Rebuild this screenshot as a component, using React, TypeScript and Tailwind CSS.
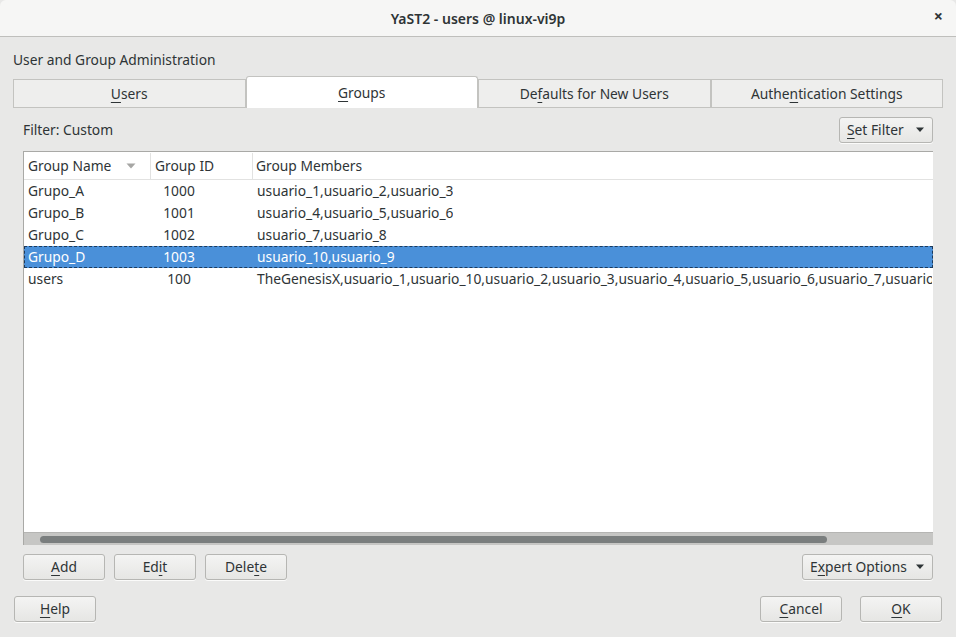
import React from 'react';

const font = { fontFamily: '"Noto Sans", "Open Sans", sans-serif' };

const rows = [
  { name: 'Grupo_A', id: '1000', members: 'usuario_1,usuario_2,usuario_3' },
  { name: 'Grupo_B', id: '1001', members: 'usuario_4,usuario_5,usuario_6' },
  { name: 'Grupo_C', id: '1002', members: 'usuario_7,usuario_8' },
  { name: 'Grupo_D', id: '1003', members: 'usuario_10,usuario_9', selected: true },
  {
    name: 'users',
    id: '100',
    members:
      'TheGenesisX,usuario_1,usuario_10,usuario_2,usuario_3,usuario_4,usuario_5,usuario_6,usuario_7,usuario_8',
  },
];

// label with one underlined mnemonic letter
const Mn: React.FC<{ pre?: string; k: string; post?: string }> = ({ pre = '', k, post = '' }) => (
  <span>
    {pre}
    <span className="underline underline-offset-[3px] decoration-1">{k}</span>
    {post}
  </span>
);

const Button: React.FC<{ className?: string; children: React.ReactNode }> = ({ className = '', children }) => (
  <button
    className={`flex h-[26px] items-center justify-center rounded-[3px] border border-[#b6b6b3] bg-gradient-to-b from-[#f4f4f3] to-[#e6e6e4] text-[13.8px] text-[#2e3436] shadow-[0_1px_0_rgba(255,255,255,0.8)] ${className}`}
  >
    {children}
  </button>
);

const Caret = () => (
  <svg width="10" height="6" viewBox="0 0 10 6" className="ml-auto">
    <path d="M1 0.5h8L5 5z" fill="#2e3436" />
  </svg>
);

const Tab: React.FC<{ active?: boolean; children: React.ReactNode }> = ({ active, children }) =>
  active ? (
    <div className="flex h-[32px] flex-1 items-center justify-center rounded-t-[3px] border border-b-0 border-[#c3c3c0] bg-white pt-[2px] text-[13.8px] text-[#2e3436]">
      {children}
    </div>
  ) : (
    <div className="flex h-[29px] flex-1 items-center justify-center border border-[#c3c3c0] bg-[#eeeeed] pt-[1px] text-[13.8px] text-[#2e3436]">
      {children}
    </div>
  );

export default function App() {
  return (
    <div className="h-[637px] w-[956px] overflow-hidden bg-[#e8e8e7] text-[13.8px] text-[#2e3436]" style={font}>
      {/* title bar */}
      <div className="relative flex h-[37px] items-center justify-center rounded-t-[6px] border-b border-[#bfbfbc] bg-[#f6f6f5]">
        <span className="text-[14px] font-semibold text-[#2e3436]">YaST2 - users @ linux-vi9p</span>
        <span className="absolute right-[13px] top-[8px] text-[16px] font-bold leading-none text-[#2e3436]">×</span>
      </div>

      <div className="px-[13px] pt-[13px]">
        <div className="leading-[20px]">User and Group Administration</div>

        {/* tabs */}
        <div className="mt-[6px] flex h-[32px] items-end">
          <Tab><Mn k="U" post="sers" /></Tab>
          <Tab active><Mn k="G" post="roups" /></Tab>
          <Tab><Mn pre="De" k="f" post="aults for New Users" /></Tab>
          <Tab><Mn pre="Authe" k="n" post="tication Settings" /></Tab>
        </div>

        <div className="px-[10px]">
          {/* filter row */}
          <div className="mt-[9px] flex h-[26px] items-center justify-between">
            <span>Filter: Custom</span>
            <Button className="w-[94px] px-[7px]">
              <Mn k="S" post="et Filter" />
              <Caret />
            </Button>
          </div>

          {/* table */}
          <div className="mt-[8px] flex h-[394px] flex-col border-l border-t border-[#a9a9a6] bg-white">
            <div className="flex h-[28px] shrink-0 items-center border-b border-[#e2e2e1] pt-[1px] text-[#2e3436]">
              <div className="flex h-full w-[127px] shrink-0 items-center border-r border-[#e2e2e1] pl-[4px] pr-[14px]">
                <span>Group Name</span>
                <svg width="10" height="6" viewBox="0 0 10 6" className="ml-auto">
                  <path d="M0.5 0.5h9L5 5.5z" fill="#a6a6a4" />
                </svg>
              </div>
              <div className="flex h-full w-[102px] shrink-0 items-center border-r border-[#e2e2e1] pl-[4px]">Group ID</div>
              <div className="pl-[3px]">Group Members</div>
            </div>
            <div className="flex-1">
              {rows.map((r) => (
                <div
                  key={r.name}
                  className={`flex h-[22px] items-center whitespace-nowrap ${
                    r.selected
                      ? 'border border-dashed border-[#1c3a5c] bg-[#4a90d9] text-white'
                      : 'border border-transparent text-[#2e3436]'
                  }`}
                >
                  <div className="w-[127px] shrink-0 pl-[3px]">{r.name}</div>
                  <div className="w-[102px] shrink-0 pl-[9px]">
                    <span className="inline-block w-[36px] text-center">{r.id}</span>
                  </div>
                  <div className="min-w-0 overflow-hidden pl-[3px]">{r.members}</div>
                </div>
              ))}
            </div>
            {/* horizontal scrollbar */}
            <div className="flex h-[13px] shrink-0 items-center border-t border-[#b5b5b3] bg-[#c6c6c4] px-[16px]">
              <div className="h-[7px] w-[787px] rounded-full bg-[#7a7e7e]" />
            </div>
          </div>

          {/* table buttons */}
          <div className="mt-[9px] flex items-center gap-[9px]">
            <Button className="w-[82px]"><Mn k="A" post="dd" /></Button>
            <Button className="w-[82px]"><Mn pre="Ed" k="i" post="t" /></Button>
            <Button className="w-[82px]"><Mn pre="Dele" k="t" post="e" /></Button>
            <Button className="ml-auto w-[131px] px-[7px]">
              <Mn pre="E" k="x" post="pert Options" />
              <Caret />
            </Button>
          </div>
        </div>

        {/* dialog buttons */}
        <div className="mt-[16px] flex items-center">
          <Button className="ml-[1px] w-[82px] pt-[1px]"><Mn k="H" post="elp" /></Button>
          <Button className="ml-auto w-[82px] pt-[1px]"><Mn k="C" post="ancel" /></Button>
          <Button className="ml-[18px] mr-[1px] w-[82px] pt-[1px]"><Mn k="O" post="K" /></Button>
        </div>
      </div>
    </div>
  );
}
